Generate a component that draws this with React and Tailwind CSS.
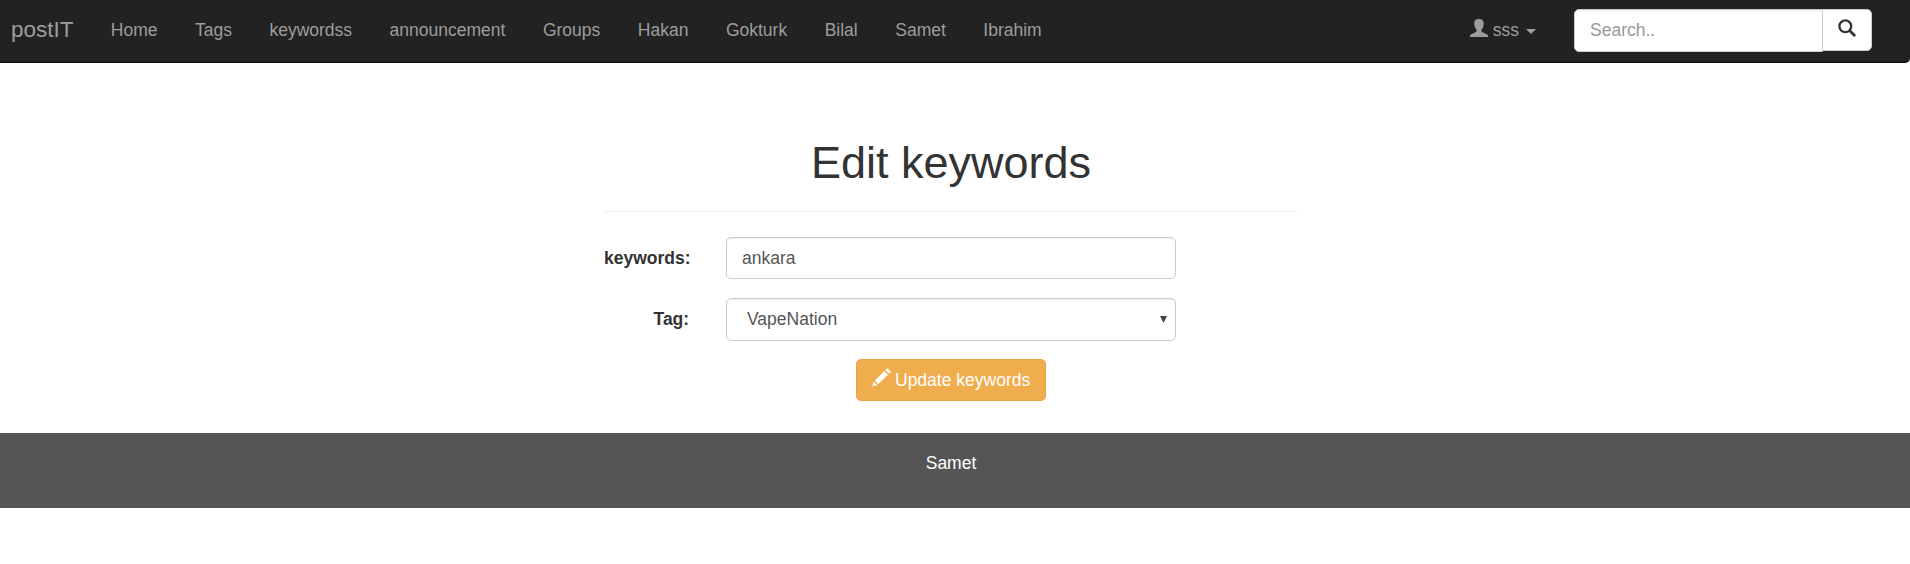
const links = ["Home", "Tags", "keywordss", "announcement", "Groups", "Hakan", "Gokturk", "Bilal", "Samet", "Ibrahim"];

function UserIcon() {
  return (
    <svg width="18" height="18" viewBox="0 0 18 18" fill="currentColor" className="shrink-0">
      <path d="M9 0C6 0 4.200 1.600 4.200 4.200C4.200 7 5.100 9.300 6.500 10.600V12C6.500 12.600 6.200 12.900 5.600 13.200L1.300 15.200C.4 15.600 0 16.200 0 17V18H18V17C18 16.200 17.600 15.600 16.700 15.200L12.400 13.200C11.800 12.900 11.500 12.600 11.500 12V10.600C12.900 9.300 13.800 7 13.800 4.200C13.800 1.600 12 0 9 0Z" />
    </svg>
  );
}

function SearchIcon() {
  return (
    <svg width="18" height="18" viewBox="0 0 18 18" fill="none" stroke="currentColor" className="shrink-0">
      <circle cx="7.300" cy="7.300" r="5.900" strokeWidth="2.300" />
      <path d="M11.800 11.800L16.300 16.300" strokeWidth="2.800" strokeLinecap="round" />
    </svg>
  );
}

function PencilIcon() {
  return (
    <svg width="19" height="19" viewBox="0 0 19 19" fill="currentColor" className="shrink-0">
      <path d="M14.600 .8Q15.300 .1 16 .8L18.300 3.100Q19 3.800 18.300 4.500L17 5.800L13.300 2.100ZM12.300 3.100L16 6.800L6.400 15.900L2.900 12.400ZM1.900 13.600L5.300 17L.2 18.600Z" />
    </svg>
  );
}

export default function App() {
  return (
    <div className="flex flex-col font-['Liberation_Sans',Arial,sans-serif] text-[17.5px] leading-[25px] text-[#333]">
      <nav className="flex h-[63px] items-start rounded-br-[5px] border-b border-[#080808] bg-[#222] pl-[11px] text-[#9d9d9d]">
        <a className="mr-[18.500px] pt-[17px] text-[22.5px]">postIT</a>
        <ul className="flex">
          {links.map((t) => (
            <li key={t} className="px-[18.750px] pt-[18px]">{t}</li>
          ))}
        </ul>
        <div className="ml-auto mr-[38px] flex items-start pt-[18px]">
          <div className="mt-px flex"><UserIcon /></div>
          <span className="ml-[5px]">sss</span>
          <span className="ml-[7px] mt-[11px] border-x-[5px] border-t-[5px] border-x-transparent border-t-[#9d9d9d]" />
        </div>
        <form className="mr-[38px] mt-[9px] flex items-start">
          <input
            placeholder="Search.."
            className="h-[43px] w-[249px] rounded-l-[5px] border border-[#ccc] bg-white px-[15px] text-[#555] shadow-[inset_0_1px_1px_rgba(0,0,0,0.075)] outline-none placeholder:text-[#999] placeholder:opacity-100"
          />
          <button type="button" className="-ml-px flex h-[42px] w-[50px] items-start justify-center rounded-r-[5px] border border-[#ccc] bg-white pt-[9px] text-[#333]">
            <SearchIcon />
          </button>
        </form>
      </nav>

      <main className="ml-[604px] flex w-[694px] flex-col">
        <h1 className="mt-[75px] text-center text-[45px] leading-[50px]">Edit keywords</h1>
        <hr className="mt-[23px] border-t border-[#eee]" />
        <div className="mt-[25px] flex h-[42px]">
          <label className="w-[122px] pt-[9px] font-bold">keywords:</label>
          <input
            defaultValue="ankara"
            className="h-[42px] w-[450px] rounded-[5px] border border-[#ccc] bg-white px-[15px] text-[#555] shadow-[inset_0_1px_1px_rgba(0,0,0,0.075)] outline-none"
          />
        </div>
        <div className="mt-[19px] flex h-[43px]">
          <label className="w-[122px] pl-[49.500px] pt-[9px] font-bold">Tag:</label>
          <div className="flex h-[43px] w-[450px] items-center justify-between rounded-[5px] border border-[#ccc] bg-white pl-[20px] pr-[8px] text-[#555] shadow-[inset_0_1px_1px_rgba(0,0,0,0.075)]">
            <span>VapeNation</span>
            <svg width="7" height="7" viewBox="0 0 7 7" fill="#444"><path d="M0 0H7L3.500 7Z" /></svg>
          </div>
        </div>
        <button type="button" className="mt-[18px] flex h-[42px] w-[190px] items-start self-center rounded-[5px] border border-[#eea236] bg-[#f0ad4e] pl-[15px] pt-[8px] text-white">
          <PencilIcon />
          <span className="ml-[4px] whitespace-nowrap">Update keywords</span>
        </button>
      </main>

      <footer className="mt-[32px] flex h-[75px] justify-center bg-[#555] pr-[8px] pt-[18px] text-white">Samet</footer>
    </div>
  );
}
